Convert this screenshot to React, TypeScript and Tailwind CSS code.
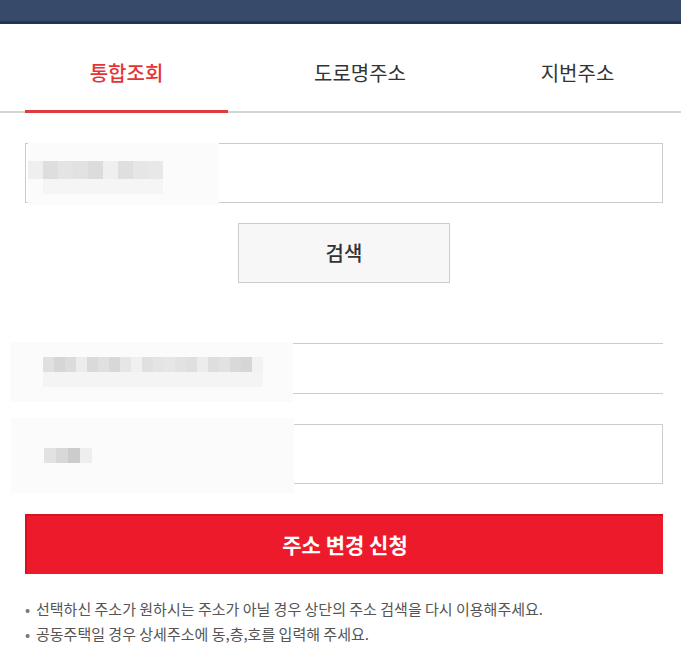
const font = { fontFamily: '"Noto Sans CJK KR", "Noto Sans", sans-serif' }

function Blur({ className, children }: { className: string; children?: React.ReactNode }) {
  return <div className={`absolute bg-[#fbfbfb] ${className}`}>{children}</div>
}

const grays1 = ["#efefef", "#dedede", "#e4e4e4", "#e2e2e2", "#dcdcdc", "#efefef", "#dfdfdf", "#e6e6e6", "#e8e8e8"]
const grays2 = ["#e0e0e0", "#d6d6d6", "#dcdcdc", "#ececec", "#dadada", "#e0e0e0", "#d8d8d8", "#e6e6e6", "#f0f0f0", "#e0e0e0", "#e4e4e4", "#e6e6e6", "#e2e2e2", "#dfdfdf", "#ececec", "#dedede", "#e2e2e2", "#d9d9d9", "#d6d6d6", "#f2f2f2"]

export default function App() {
  return (
    <div className="w-[681px] h-[656px] bg-white overflow-hidden" style={font}>
      <div className="h-[21px] bg-[#384a69]" />
      <div className="h-[3px] bg-[#26344f]" />

      <div className="flex h-[89px] pl-[25px] pr-[18px] pt-[10px] border-b-2 border-[#d4d4d4]">
        <div className="relative w-[203px] flex items-center justify-center text-[20px] font-medium text-[#e3343a]">
          통합조회
          <div className="absolute left-0 right-0 -bottom-[2px] h-[3px] bg-[#e03a3a]" />
        </div>
        <div className="w-[264px] flex items-center justify-center text-[20px] text-[#333]">도로명주소</div>
        <div className="flex-1 flex items-center justify-center text-[20px] text-[#333]">지번주소</div>
      </div>

      <div className="pl-[25px] pr-[18px]">
        <div className="relative mt-[30px] h-[60px] border border-[#cccccc]">
          <Blur className="left-[2px] -top-[1px] w-[191px] h-[62px]">
            <div className="flex mt-[18px]">
              {grays1.map((c, i) => (
                <div key={i} className="w-[15px] h-[18px]" style={{ background: c }} />
              ))}
            </div>
            <div className="ml-[15px] w-[120px] h-[15px] bg-[#f5f5f5]" />
          </Blur>
        </div>

        <div className="flex justify-center mt-[20px]">
          <div className="w-[212px] h-[60px] border border-[#cccccc] bg-[#f7f7f7] flex items-center justify-center text-[20px] font-medium text-[#333]">
            검색
          </div>
        </div>

        <div className="relative mt-[60px]">
          <div className="h-[51px] border-y border-[#cccccc]" />
          <Blur className="-left-[15px] -top-[1px] w-[283px] h-[60px]">
            <div className="flex mt-[15px] ml-[33px]">
              {grays2.map((c, i) => (
                <div key={i} className="w-[11px] h-[15px]" style={{ background: c }} />
              ))}
            </div>
            <div className="ml-[33px] w-[220px] h-[15px] bg-[#f4f4f4]" />
          </Blur>
        </div>

        <div className="relative mt-[30px] h-[60px] border border-[#cccccc]">
          <Blur className="-left-[15px] -top-[7px] w-[283px] h-[75px]">
            <div className="flex mt-[30px] ml-[33px]">
              {["#e2e2e2", "#d8d8d8", "#cccccc", "#eeeeee"].map((c, i) => (
                <div key={i} className="w-[12px] h-[15px]" style={{ background: c }} />
              ))}
            </div>
          </Blur>
        </div>

        <div className="mt-[30px] h-[60px] bg-[#ec1a2a] border-t-2 border-l-2 border-[#d8121e] flex items-center justify-center text-white text-[21px] font-bold">
          주소 변경 신청
        </div>

        <ul className="mt-[22px] text-[15px] text-[#555] leading-[25px]">
          <li className="flex">
            <span className="w-[11px] text-[#777]">•</span>선택하신 주소가 원하시는 주소가 아닐 경우 상단의 주소 검색을 다시 이용해주세요.
          </li>
          <li className="flex">
            <span className="w-[11px] text-[#777]">•</span>공동주택일 경우 상세주소에 동,층,호를 입력해 주세요.
          </li>
        </ul>
      </div>
    </div>
  )
}
